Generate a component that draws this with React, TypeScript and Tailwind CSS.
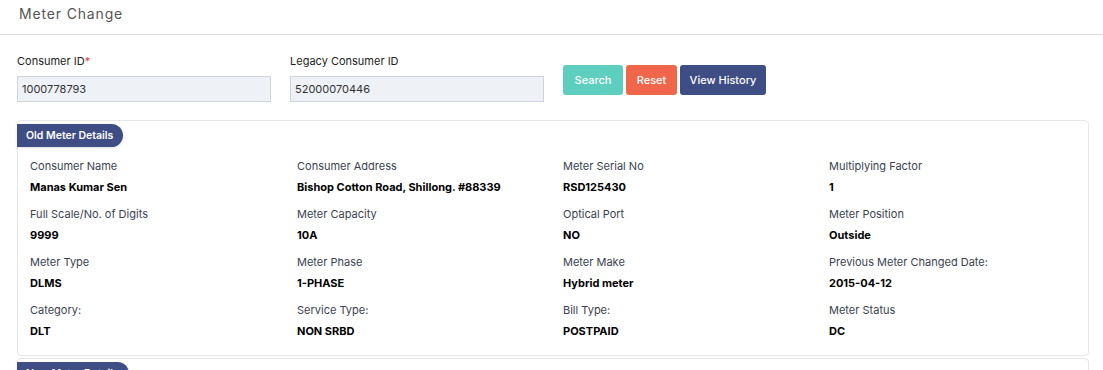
import React from 'react'

const oldMeter: [string, string][] = [
  ['Consumer Name', 'Manas Kumar Sen'],
  ['Consumer Address', 'Bishop Cotton Road, Shillong. #88339'],
  ['Meter Serial No', 'RSD125430'],
  ['Multiplying Factor', '1'],
  ['Full Scale/No. of Digits', '9999'],
  ['Meter Capacity', '10A'],
  ['Optical Port', 'NO'],
  ['Meter Position', 'Outside'],
  ['Meter Type', 'DLMS'],
  ['Meter Phase', '1-PHASE'],
  ['Meter Make', 'Hybrid meter'],
  ['Previous Meter Changed Date:', '2015-04-12'],
  ['Category:', 'DLT'],
  ['Service Type:', 'NON SRBD'],
  ['Bill Type:', 'POSTPAID'],
  ['Meter Status', 'DC'],
]

function Field({ label, value, required }: { label: string; value: string; required?: boolean }) {
  return (
    <div className="w-[254px]">
      <label className="block text-[11px] leading-[14px] text-[#222]">
        {label}
        {required ? <span className="text-[#e53935]">*</span> : null}
      </label>
      <input
        readOnly
        value={value}
        className="mt-[8px] h-[26px] w-full border border-[#cfd3da] bg-[#eef1f6] px-[4px] text-[11px] text-[#333] outline-none"
      />
    </div>
  )
}

function Badge({ children }: { children: React.ReactNode }) {
  return (
    <div className="-ml-px w-fit h-[23px] rounded-r-full bg-[#3f4d85] pl-[9px] pr-[10px] text-[10.5px] font-semibold leading-[23px] text-white shadow-sm">
      {children}
    </div>
  )
}

export default function App() {
  return (
    <div className="h-[370px] overflow-hidden bg-white font-['Inter',sans-serif] text-[#222]">
      <div className="h-[35px] border-b border-[#dcdcdc] pl-[19px] pt-[5px]">
        <h1 className="text-[14px] leading-[18px] tracking-[0.06em] text-[#555]">Meter Change</h1>
      </div>

      <div className="flex items-start gap-[19px] px-[17px] pt-[19px]">
        <Field label="Consumer ID" value="1000778793" required />
        <Field label="Legacy Consumer ID" value="52000070446" />
        <div className="flex gap-[3px] pt-[11px]">
          <button className="h-[30px] w-[60px] rounded-[3px] bg-[#5ecfbf] text-[11px] font-medium text-white">Search</button>
          <button className="h-[30px] w-[51px] rounded-[3px] bg-[#f0664b] text-[11px] font-medium text-white">Reset</button>
          <button className="h-[30px] w-[86px] rounded-[3px] bg-[#3f4d85] text-[11px] font-medium text-white">View History</button>
        </div>
      </div>

      <div className="mx-[17px] mt-[18px] w-[1072px] rounded-[4px] border border-[#e6e6e6] pb-[17px] pt-[3px]">
        <Badge>Old Meter Details</Badge>
        <div className="mt-[12px] grid grid-cols-[267px_266px_266px_1fr] gap-y-[13px] pl-[12px]">
          {oldMeter.map(([label, value]) => (
            <div key={label}>
              <div className="text-[11px] leading-[14px] text-[#3a3f4f]">{label}</div>
              <div className="mt-[7px] text-[11px] font-bold leading-[14px] text-black">{value}</div>
            </div>
          ))}
        </div>
      </div>

      <div className="mx-[17px] mt-[2px] w-[1072px] rounded-[4px] border border-[#e6e6e6] pt-[3px]">
        <Badge>New Meter Details</Badge>
      </div>
    </div>
  )
}
